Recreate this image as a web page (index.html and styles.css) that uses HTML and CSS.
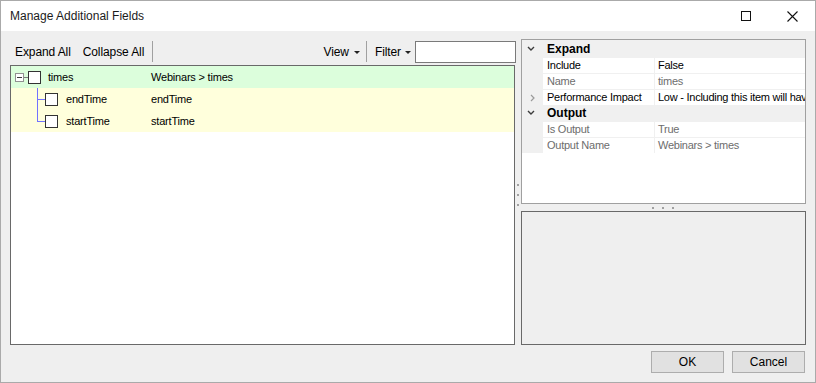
FILE: index.html
```html
<!DOCTYPE html>
<html>
<head>
<meta charset="utf-8">
<link rel="stylesheet" href="styles.css">
</head>
<body>
<div class="window">
  <div class="titlebar">
    <span class="title">Manage Additional Fields</span>
    <div class="capbtns">
      <div class="capbtn"><svg width="10" height="10" viewBox="0 0 10 10"><rect x="0.5" y="0.5" width="9" height="9" fill="none" stroke="#111" stroke-width="1"/></svg></div>
      <div class="capbtn"><svg width="11" height="11" viewBox="0 0 11 11"><path d="M0.5 0.5 L10.5 10.5 M10.5 0.5 L0.5 10.5" stroke="#111" stroke-width="1.1" fill="none"/></svg></div>
    </div>
  </div>
  <div class="content">
    <div class="panes">
      <div class="left">
        <div class="toolbar">
          <span class="tb-item">Expand All</span>
          <span class="tb-item tb-collapse">Collapse All</span>
          <span class="tb-sep tb-sep-first"></span>
          <div class="tb-right">
            <span class="tb-item">View</span><span class="dd-arrow dd-view"></span>
            <span class="tb-sep tb-sep-mid"></span>
            <span class="tb-item">Filter</span><span class="dd-arrow dd-filter"></span>
            <span class="filter-box"></span>
          </div>
        </div>
        <div class="tree">
          <div class="row row-parent">
            <span class="expander"><span class="minus"></span></span>
            <span class="connector"></span>
            <span class="check"></span>
            <span class="cell name-parent">times</span>
            <span class="cell">Webinars &gt; times</span>
          </div>
          <div class="row row-child">
            <span class="branch branch-mid"></span>
            <span class="check"></span>
            <span class="cell name-child">endTime</span>
            <span class="cell">endTime</span>
          </div>
          <div class="row row-child">
            <span class="branch branch-last"></span>
            <span class="check"></span>
            <span class="cell name-child">startTime</span>
            <span class="cell">startTime</span>
          </div>
        </div>
      </div>
      <div class="vsplit"><i></i><i></i><i></i></div>
      <div class="right">
        <div class="grid">
          <div class="grid-rows">
            <div class="cat">
              <span class="gutter"><svg width="8" height="6" viewBox="0 0 8 6"><polyline points="1,1 4,4 7,1" fill="none" stroke="#3c3c3c" stroke-width="1.4"/></svg></span>
              <span class="cat-label">Expand</span>
            </div>
            <div class="item">
              <span class="gutter"></span>
              <span class="label">Include</span><span class="value">False</span>
            </div>
            <div class="item dim">
              <span class="gutter"></span>
              <span class="label">Name</span><span class="value">times</span>
            </div>
            <div class="item">
              <span class="gutter"><svg width="5" height="8" viewBox="0 0 5 8"><polyline points="1,1 4,4 1,7" fill="none" stroke="#9a9a9a" stroke-width="1.2"/></svg></span>
              <span class="label">Performance Impact</span><span class="value">Low - Including this item will have a performance impact</span>
            </div>
            <div class="cat">
              <span class="gutter"><svg width="8" height="6" viewBox="0 0 8 6"><polyline points="1,1 4,4 7,1" fill="none" stroke="#3c3c3c" stroke-width="1.4"/></svg></span>
              <span class="cat-label">Output</span>
            </div>
            <div class="item dim">
              <span class="gutter"></span>
              <span class="label">Is Output</span><span class="value">True</span>
            </div>
            <div class="item dim">
              <span class="gutter"></span>
              <span class="label">Output Name</span><span class="value">Webinars &gt; times</span>
            </div>
          </div>
        </div>
        <div class="hsplit"><i></i><i></i><i></i></div>
        <div class="preview"></div>
      </div>
    </div>
    <div class="footer">
      <span class="btn">OK</span>
      <span class="btn">Cancel</span>
    </div>
  </div>
</div>
</body>
</html>
```

FILE: styles.css
```css
html, body {
  margin: 0;
  padding: 0;
  background: #ffffff;
}
body {
  width: 816px;
  height: 383px;
  overflow: hidden;
  font-family: "Liberation Sans", Arial, sans-serif;
  color: #000;
}
.window {
  box-sizing: border-box;
  width: 816px;
  height: 383px;
  border: 1px solid #aaaaaa;
  display: flex;
  flex-direction: column;
}
.titlebar {
  height: 30px;
  background: #ffffff;
  display: flex;
  align-items: center;
  padding-left: 9px;
  flex: none;
}
.title {
  font-size: 12px;
  color: #1b1b1b;
}
.capbtns {
  margin-left: auto;
  display: flex;
  height: 30px;
}
.capbtn {
  width: 46px;
  height: 30px;
  display: flex;
  align-items: center;
  justify-content: center;
}
.capbtn svg { display: block; }

.content {
  flex: 1;
  background: #efefef;
  display: flex;
  flex-direction: column;
  padding: 7px 9px 0 9px;
  min-height: 0;
}
.panes {
  display: flex;
  height: 307px;
  flex: none;
}
.left {
  width: 506px;
  display: flex;
  flex-direction: column;
  flex: none;
}
.toolbar {
  height: 27px;
  display: flex;
  align-items: center;
  padding-left: 5px;
  font-size: 12px;
  flex: none;
}
.tb-item {
  color: #000;
  white-space: nowrap;
  letter-spacing: -0.1px;
}
.tb-collapse { margin-left: 12px; }
.tb-sep {
  width: 1px;
  height: 21px;
  background: #a0a0a0;
}
.tb-sep-first { margin-left: 8px; }
.tb-right {
  margin-left: auto;
  display: flex;
  align-items: center;
  height: 27px;
}
.dd-arrow {
  width: 0;
  height: 0;
  border-left: 3px solid transparent;
  border-right: 3px solid transparent;
  border-top: 3px solid #222;
  margin-top: 2px;
}
.dd-view { margin-left: 5px; }
.tb-sep-mid { margin-left: 6px; margin-right: 8px; }
.dd-filter { margin-left: 4px; }
.filter-box {
  box-sizing: border-box;
  width: 101px;
  height: 22px;
  margin-left: 4px;
  background: #fff;
  border: 1px solid #7a7a7a;
}
.tree {
  flex: 1;
  box-sizing: border-box;
  width: 505px;
  border: 1px solid #696969;
  background: #ffffff;
  font-size: 11px;
  letter-spacing: -0.2px;
}
.row {
  height: 22px;
  display: flex;
  align-items: center;
}
.row-parent {
  background: #dcfedc;
  padding-left: 4px;
}
.row-child {
  background: #ffffdc;
  padding-left: 26px;
}
.expander {
  box-sizing: border-box;
  width: 9px;
  height: 9px;
  border: 1px solid #919191;
  background: #fff;
  display: flex;
  align-items: center;
  justify-content: center;
}
.minus {
  width: 5px;
  height: 1px;
  background: #3a3a3a;
}
.connector {
  width: 4px;
  height: 1px;
  background: #7a7a7a;
}
.check {
  box-sizing: border-box;
  width: 13px;
  height: 13px;
  border: 1px solid #333;
  background: #fff;
  flex: none;
}
.cell {
  white-space: nowrap;
}
.name-parent {
  margin-left: 7px;
  width: 103px;
}
.name-child {
  margin-left: 8px;
  width: 85px;
}
.branch {
  width: 8px;
  height: 22px;
  flex: none;
}
.branch-mid {
  background:
    linear-gradient(#7272ff, #7272ff) left top / 1px 22px no-repeat,
    linear-gradient(#7272ff, #7272ff) left 11px / 8px 1px no-repeat;
}
.branch-last {
  background:
    linear-gradient(#7272ff, #7272ff) left top / 1px 12px no-repeat,
    linear-gradient(#7272ff, #7272ff) left 11px / 8px 1px no-repeat;
}

.vsplit {
  width: 5px;
  flex: none;
  display: flex;
  flex-direction: column;
  padding-top: 146px;
  padding-left: 1px;
  box-sizing: border-box;
  gap: 8px;
}
.vsplit i, .hsplit i {
  display: block;
  width: 2px;
  height: 2px;
  background: #a0a0a0;
}
.right {
  flex: 1;
  display: flex;
  flex-direction: column;
  min-width: 0;
}
.grid {
  margin-top: 1px;
  height: 165px;
  box-sizing: border-box;
  border: 1px solid #a0a0a0;
  background: #ffffff;
  overflow: hidden;
  font-size: 11px;
  flex: none;
}
.grid-rows {
  background: #f0f0f0;
  padding-top: 1px;
}
.cat {
  height: 16px;
  display: flex;
  align-items: center;
}
.gutter {
  width: 21px;
  height: 15px;
  flex: none;
  display: flex;
  align-items: center;
  justify-content: center;
}
.cat .gutter { padding-right: 3px; box-sizing: border-box; }
.cat-label {
  font-weight: bold;
  font-size: 12px;
  margin-left: 4px;
}
.item {
  height: 16px;
  box-sizing: border-box;
  padding-top: 1px;
  display: flex;
  letter-spacing: -0.25px;
}
.label {
  width: 111px;
  height: 15px;
  background: #fff;
  padding-left: 4px;
  box-sizing: border-box;
  line-height: 15px;
  white-space: nowrap;
  flex: none;
}
.value {
  flex: 1;
  margin-left: 1px;
  height: 15px;
  background: #fff;
  padding-left: 3px;
  line-height: 15px;
  white-space: nowrap;
  overflow: hidden;
}
.dim .label, .dim .value { color: #6d6d6d; }

.hsplit {
  height: 7px;
  flex: none;
  display: flex;
  padding-top: 3px;
  padding-left: 131px;
  box-sizing: border-box;
  gap: 8px;
}
.preview {
  flex: 1;
  box-sizing: border-box;
  border: 1px solid #696969;
  background: #efefef;
}
.footer {
  flex: 1;
  display: flex;
  justify-content: flex-end;
  align-items: flex-start;
  padding-top: 6px;
  padding-right: 1px;
  gap: 8px;
}
.btn {
  box-sizing: border-box;
  width: 73px;
  height: 22px;
  background: #e1e1e1;
  border: 1px solid #adadad;
  font-size: 12px;
  display: flex;
  align-items: center;
  justify-content: center;
}
```
